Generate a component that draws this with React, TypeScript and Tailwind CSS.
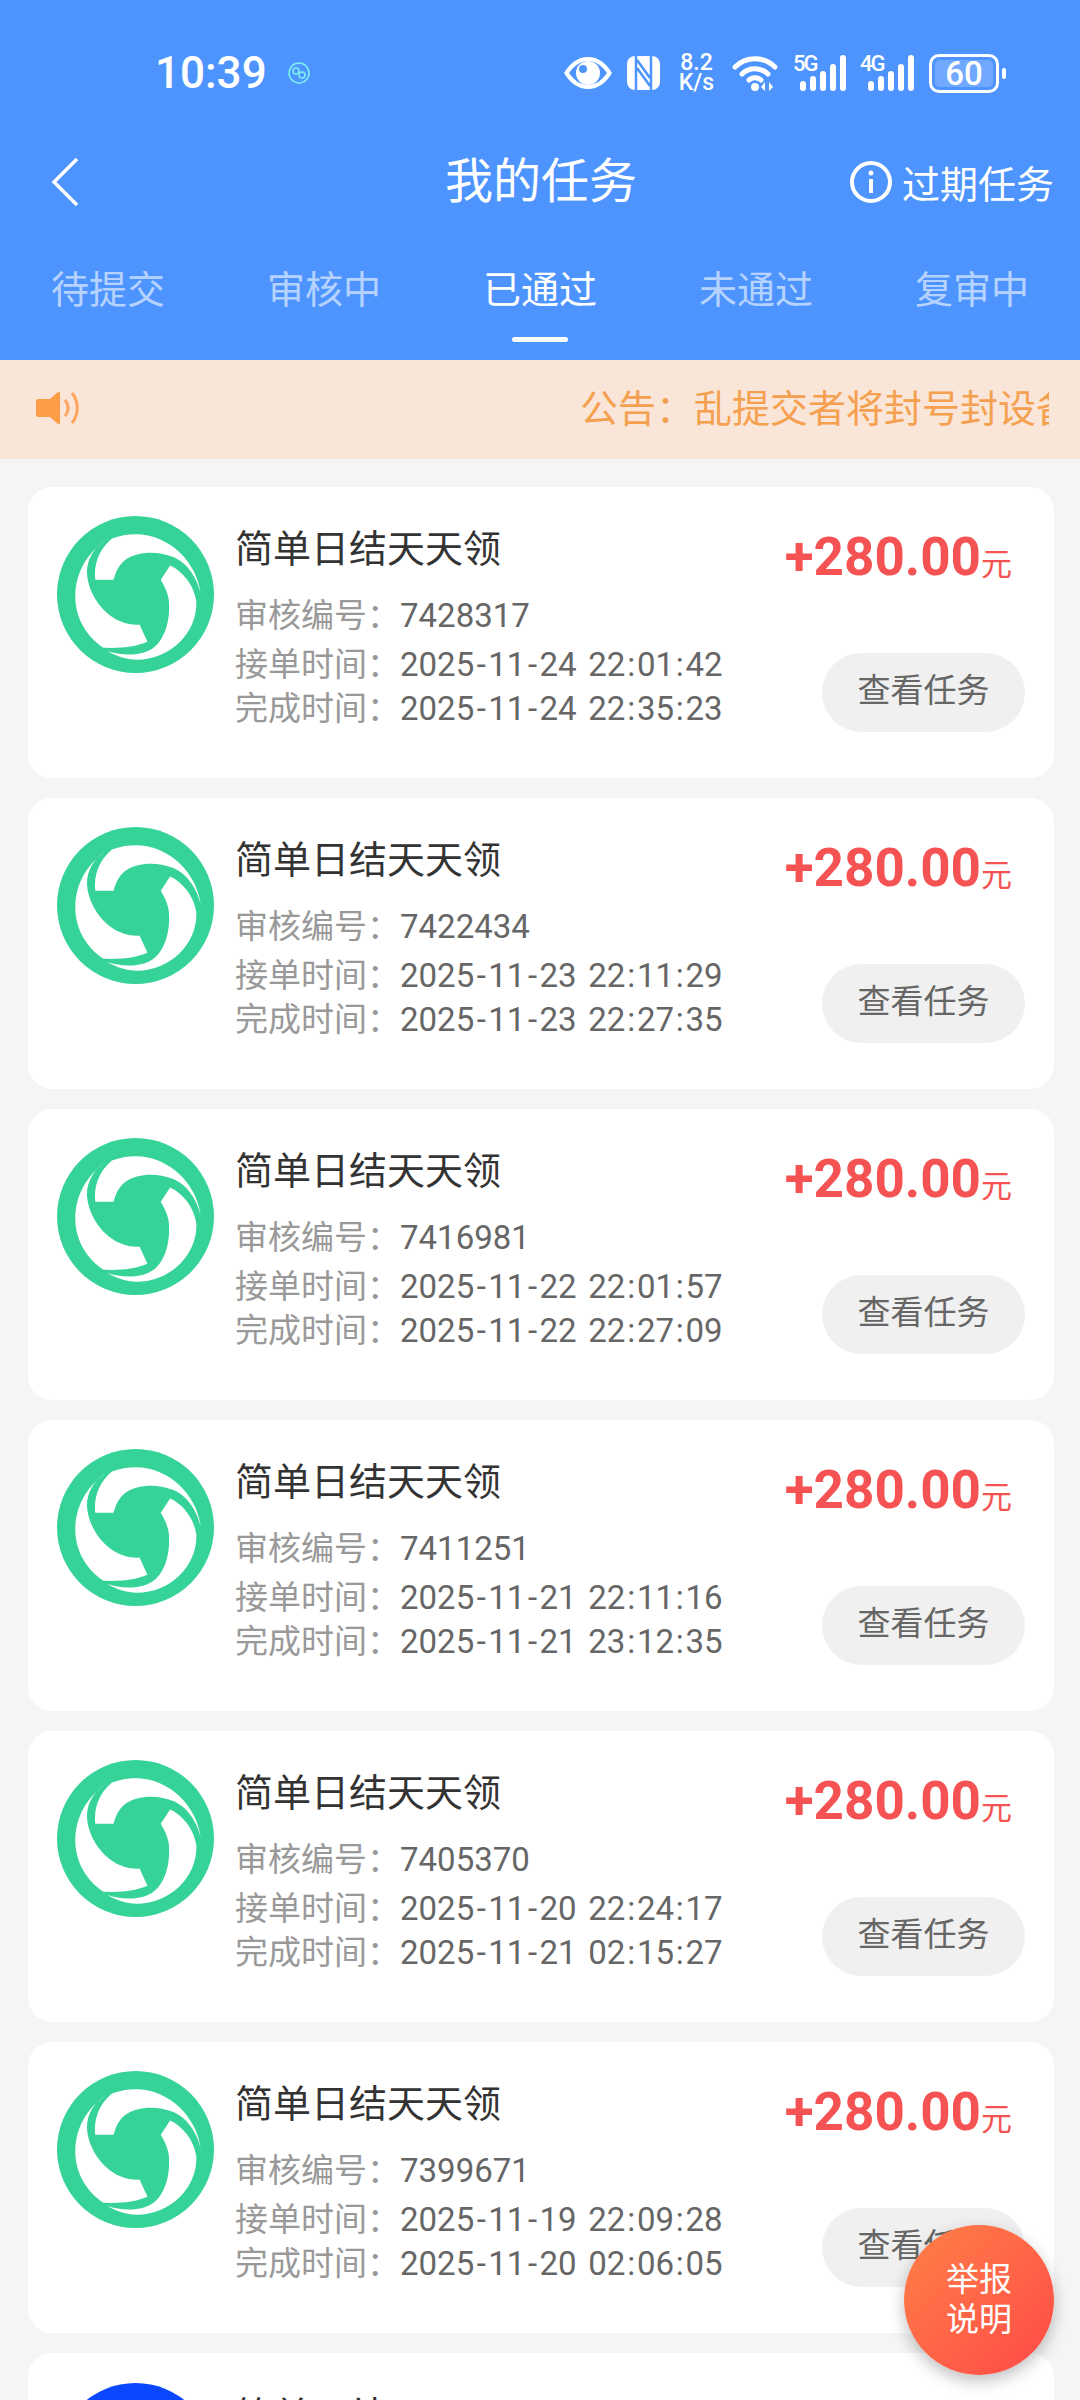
import { Fragment } from "react";

const tabs = ["待提交", "审核中", "已通过", "未通过", "复审中"];

const tasks = [
  { code: "7428317", taken: "2025-11-24 22:01:42", done: "2025-11-24 22:35:23" },
  { code: "7422434", taken: "2025-11-23 22:11:29", done: "2025-11-23 22:27:35" },
  { code: "7416981", taken: "2025-11-22 22:01:57", done: "2025-11-22 22:27:09" },
  { code: "7411251", taken: "2025-11-21 22:11:16", done: "2025-11-21 23:12:35" },
  { code: "7405370", taken: "2025-11-20 22:24:17", done: "2025-11-21 02:15:27" },
  { code: "7399671", taken: "2025-11-19 22:09:28", done: "2025-11-20 02:06:05" },
];

// green disc with three white crescents cut into it
function SwirlLogo() {
  return (
    <svg viewBox="50 48 472 472" className="w-[157px] h-[157px] shrink-0">
      <circle cx="286" cy="284" r="236" fill="#36D399" />
      <g fill="#fff">
        <path d="M165 240H220C225 220 235 195 255 180C290 155 350 152 395 170C440 185 472 235 482 282C472 190 390 103 286 103C262 103 238 107 215 116C175 150 160 195 165 240Z" />
        <path d="M198 120C162 140 140 178 140 218C142 280 190 350 250 368C268 374 285 376 298 374L322 426C285 442 240 446 190 444C140 412 105 355 105 290C105 215 145 155 198 120Z" />
        <path d="M362 240L390 197C430 215 462 258 469 305C472 400 390 480 290 480C258 480 228 470 202 454C240 468 300 470 335 448C375 422 392 360 386 300C382 275 372 258 362 240Z" />
      </g>
    </svg>
  );
}

function SignalBars() {
  return (
    <svg viewBox="0 0 46 36" className="w-[46px] h-[36px]" fill="#fff">
      <rect x="0" y="26" width="6" height="10" rx="3" />
      <rect x="10" y="21" width="6" height="15" rx="3" />
      <rect x="20" y="16" width="6" height="20" rx="3" />
      <rect x="30" y="9" width="6" height="27" rx="3" />
      <rect x="40" y="0" width="6" height="36" rx="3" />
    </svg>
  );
}

// dates get a little air around the separators
function DateText({ value }: { value: string }) {
  return (
    <span className="text-[#666]">
      {value.split(/([-: ])/).map((part, i) =>
        part === "-" ? (
          <span key={i} className="mx-[2.5px]">-</span>
        ) : part === ":" || part === " " ? (
          <span key={i} className="mx-[1.75px]">{part}</span>
        ) : (
          <Fragment key={i}>{part}</Fragment>
        ),
      )}
    </span>
  );
}

function StatusBar() {
  return (
    <div className="h-[133px] flex items-center pl-[155px] pr-[74px] pt-[13px] text-white">
      <span className="text-[44px] leading-none font-medium">10:39</span>
      <svg viewBox="0 0 22 24" className="ml-[21px] w-[22px] h-[24px]" fill="none" stroke="#7ff0f0" strokeWidth="1.5">
        <circle cx="11" cy="12" r="10" />
        <circle cx="8" cy="10" r="3" />
        <circle cx="14" cy="14" r="3" />
      </svg>
      {/* eye */}
      <svg viewBox="0 0 48 32" className="ml-auto w-[48px] h-[32px]">
        <path fill="#fff" d="M0 16C6 6 14 0 24 0S42 6 48 16C42 26 34 32 24 32S6 26 0 16Z" />
        <path fill="#4D94FF" d="M5 16C10 9 16 4 24 4S38 9 43 16C38 23 32 28 24 28S10 23 5 16Z" />
        <circle cx="24" cy="16" r="12" fill="#fff" />
        <circle cx="19" cy="12" r="4" fill="#4D94FF" />
      </svg>
      {/* nfc */}
      <svg viewBox="0 0 33 34" className="ml-[15px] w-[33px] h-[34px]">
        <rect width="33" height="34" rx="8" fill="#fff" />
        <path fill="none" stroke="#4D94FF" strokeWidth="2.5" d="M9 0V34M24 0V34M10 4L23 22M10 12L23 30" />
      </svg>
      <div className="ml-[19px] w-[35px] flex flex-col items-center text-[23px] leading-[20px] font-medium">
        <span>8.2</span>
        <span>K/s</span>
      </div>
      {/* wifi */}
      <svg viewBox="0 0 46 36" className="ml-[18px] w-[46px] h-[36px]">
        <path fill="none" stroke="#fff" strokeWidth="5" strokeLinecap="round" d="M3 12C14 1 32 1 43 12M10 19C17 12 29 12 36 19M17 25C20 22 26 22 29 25" />
        <circle cx="23" cy="32" r="4" fill="#fff" />
        <path fill="#fff" d="M33 27V36L29 32ZM37 27V36L41 32Z" />
      </svg>
      <div className="ml-[15px] relative w-[53px] h-[36px] flex justify-end">
        <SignalBars />
        <span className="absolute left-0 top-0 text-[22px] leading-[17px] font-medium tracking-[-2px]">5G</span>
      </div>
      <div className="ml-[14px] relative w-[54px] h-[36px] flex justify-end">
        <SignalBars />
        <span className="absolute left-0 top-0 text-[22px] leading-[17px] font-medium tracking-[-2px]">4G</span>
      </div>
      <div className="ml-[15px] w-[70px] h-[39px] rounded-[10px] border-[3px] border-white p-[3px] flex">
        <span className="flex-1 rounded-[5px] bg-white/20 flex items-center justify-center text-[33px] leading-none font-medium">60</span>
      </div>
      <div className="ml-[3px] w-[4px] h-[11px] rounded-full bg-white" />
    </div>
  );
}

function TaskCard({ code, taken, done }: { code: string; taken: string; done: string }) {
  return (
    <div className="h-[291px] bg-white rounded-[24px] flex pl-[29px] pr-[29px] pt-[29px]">
      <SwirlLogo />
      <div className="ml-[21px] flex-1 min-w-0">
        <p className="text-[38px] leading-[46px] text-[#333] mt-[10px]">简单日结天天领</p>
        <div className="mt-[22px] text-[33px] text-[#999] leading-[44px]">
          审核编号：<span className="text-[#666]">{code}</span>
        </div>
        <div className="mt-[5px] text-[33px] text-[#999] leading-[44px] whitespace-nowrap">
          接单时间：<DateText value={taken} />
        </div>
        <div className="text-[33px] text-[#999] leading-[44px] whitespace-nowrap">
          完成时间：<DateText value={done} />
        </div>
      </div>
      <div className="flex flex-col items-end">
        <div className="pr-[13px] mt-[8px] flex items-baseline text-[#F55353] whitespace-nowrap">
          <span className="text-[53px] leading-[66px] font-bold">+280.00</span>
          <span className="text-[31px] leading-none">元</span>
        </div>
        <button className="mt-[63px] w-[203px] h-[79px] pb-[3px] rounded-full bg-[#F0F0F0] text-[33px] text-[#666]">
          查看任务
        </button>
      </div>
    </div>
  );
}

export default function App() {
  return (
    <div
      className="relative h-[2400px] overflow-hidden bg-[#F5F5F5]"
      style={{ fontFamily: 'Roboto, "Noto Sans CJK SC", sans-serif' }}
    >
      <header className="h-[360px] bg-[#4D94FF] text-white flex flex-col">
        <StatusBar />
        <div className="h-[98px] flex items-center pl-[50px] pr-[26px]">
          <svg viewBox="0 0 30 50" className="w-[30px] h-[50px]" fill="none" stroke="#fff" strokeWidth="3.5">
            <path d="M27 2L4 25L27 48" />
          </svg>
          <h1 className="ml-[365px] text-[48px] leading-none font-normal">我的任务</h1>
          <svg viewBox="0 0 42 42" className="ml-auto w-[42px] h-[42px]" fill="none">
            <circle cx="21" cy="21" r="19" stroke="#fff" strokeWidth="4" />
            <rect x="19" y="18" width="4" height="14" fill="#fff" />
            <circle cx="21" cy="12" r="2.5" fill="#fff" />
          </svg>
          <span className="ml-[10px] mt-[5px] text-[38px] leading-none">过期任务</span>
        </div>
        <nav className="flex-1 grid grid-cols-5">
          {tabs.map((tab) => (
            <div key={tab} className="flex flex-col items-center pt-[37px]">
              <span className={`text-[38px] leading-[44px] ${tab === "已通过" ? "text-white" : "text-white/60"}`}>{tab}</span>
              {tab === "已通过" && <span className="mt-[25px] w-[56px] h-[5px] rounded-full bg-white" />}
            </div>
          ))}
        </nav>
      </header>

      <div className="h-[99px] bg-[#FAE6D9] flex items-center pl-[36px] pr-[31px]">
        <svg viewBox="0 0 44 36" className="w-[44px] h-[36px] mb-[3px] shrink-0">
          <path fill="#FF9D47" d="M2 9H14L22 2Q24 1 24 3V33Q24 35 22 34L14 27H2Q0 27 0 25V11Q0 9 2 9Z" />
          <path fill="none" stroke="#FFA45C" strokeWidth="3" d="M29 10C33 15 33 21 29 26M36 3C43 12 43 24 36 33" />
        </svg>
        <div className="ml-[500px] mb-[2px] flex-1 overflow-hidden text-[38px] leading-none text-[#F5A04F] whitespace-nowrap">
          公告：乱提交者将封号封设备
        </div>
      </div>

      <main className="pl-[28px] pr-[26px] pt-[28px] flex flex-col gap-[20px]">
        {tasks.map((t) => (
          <TaskCard key={t.code} code={t.code} taken={t.taken} done={t.done} />
        ))}
        <div className="h-[291px] bg-white rounded-[24px] pl-[29px] pt-[30px] flex">
          <div className="w-[157px] h-[157px] rounded-full bg-[#0A47FF] shrink-0" />
          <p className="ml-[21px] text-[38px] leading-[46px] text-[#333] mt-[10px]">简单日结</p>
        </div>
      </main>

      {/* floating report button */}
      <button className="absolute left-[904px] top-[2225px] w-[150px] h-[150px] rounded-full bg-gradient-to-br from-[#FF7F47] to-[#FF4747] shadow-[0_6px_16px_rgba(0,0,0,0.25)] text-white text-[33px] leading-[40px]">
        举报
        <br />
        说明
      </button>
    </div>
  );
}
